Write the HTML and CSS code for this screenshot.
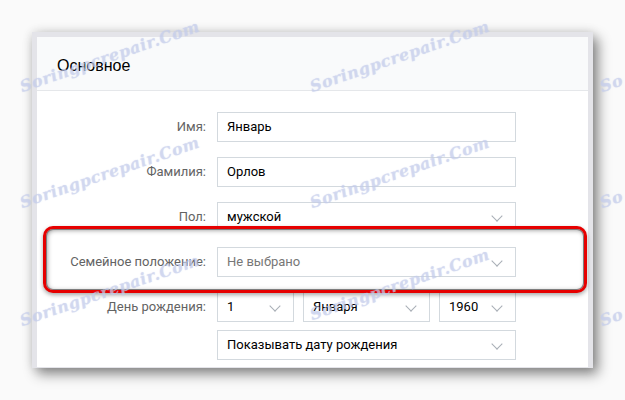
FILE: index.html
```html
<!DOCTYPE html>
<html lang="ru">
<head>
<meta charset="utf-8">
<title>Основное</title>
<link rel="stylesheet" href="styles.css">
</head>
<body>
<div class="frame">
  <div class="card">
    <div class="card-head">Основное</div>
    <div class="card-body">
      <div class="row">
        <div class="label">Имя:</div>
        <div class="field"><div class="input">Январь</div></div>
      </div>
      <div class="row">
        <div class="label">Фамилия:</div>
        <div class="field"><div class="input">Орлов</div></div>
      </div>
      <div class="row">
        <div class="label">Пол:</div>
        <div class="field"><div class="input select">мужской<span class="chev"></span></div></div>
      </div>
      <div class="row row-marked">
        <div class="label">Семейное положение:</div>
        <div class="field"><div class="input select placeholder">Не выбрано<span class="chev"></span></div></div>
      </div>
      <div class="row">
        <div class="label">День рождения:</div>
        <div class="field date">
          <div class="input select">1<span class="chev"></span></div>
          <div class="input select">Января<span class="chev"></span></div>
          <div class="input select">1960<span class="chev"></span></div>
        </div>
      </div>
      <div class="row row-tight">
        <div class="label"></div>
        <div class="field"><div class="input select">Показывать дату рождения<span class="chev"></span></div></div>
      </div>
    </div>
  </div>
</div>
<div class="watermarks" aria-hidden="true">
  <span class="wm wm1">Soringpcrepair.Com</span>
  <span class="wm wm2">Soringpcrepair.Com</span>
  <span class="wm wm3">So</span>
  <span class="wm wm4">Soringpcrepair.Com</span>
  <span class="wm wm5">Soringpcrepair.Com</span>
  <span class="wm wm6">So</span>
  <span class="wm wm7">Soringpcrepair.Com</span>
  <span class="wm wm8">Soringpcrepair.Com</span>
  <span class="wm wm9">So</span>
</div>
</body>
</html>
```
FILE: styles.css
```css
* { box-sizing: border-box; }
html, body { margin: 0; padding: 0; }
body {
  width: 625px;
  height: 400px;
  overflow: hidden;
  background: #fafafa;
  font-family: Roboto, "Liberation Sans", sans-serif;
  font-size: 13px;
  position: relative;
  padding: 32px 0 0 32px;
}
.frame {
  width: 561px;
  border: 5px solid #e4e4e9;
  border-bottom-width: 1px;
  background: #fff;
  box-shadow: 5px 6px 12px rgba(0,0,0,0.45), 0 0 10px rgba(0,0,0,0.12);
}
.card-head {
  height: 54px;
  background: #f9fafb;
  border-bottom: 1px solid #e5e7ea;
  padding: 20px 0 0 20px;
  font-family: "Liberation Sans", Arial, sans-serif;
  font-size: 16px;
  color: #000;
  line-height: 18px;
}
.card-body {
  padding: 21px 0 7px 0;
  display: flex;
  flex-direction: column;
  gap: 15px;
}
.row {
  display: grid;
  grid-template-columns: 169px 299px;
  column-gap: 11px;
  align-items: center;
}
.row-tight { margin-top: -7px; }
.label {
  text-align: right;
  color: #636363;
  line-height: 16px;
}
.field.date {
  display: grid;
  grid-template-columns: 77px 127px 77px;
  column-gap: 9px;
}
.input {
  position: relative;
  height: 30px;
  border: 1px solid #d3d9de;
  background: #fff;
  padding: 0 9px;
  line-height: 28px;
  color: #000;
  white-space: nowrap;
}
.input.placeholder { color: #777; }
.chev {
  position: absolute;
  right: 14px;
  top: 9px;
  width: 8px;
  height: 8px;
  border-right: 1.3px solid #a8aeb6;
  border-bottom: 1.3px solid #a8aeb6;
  transform: rotate(45deg);
}
.row-marked {
  position: relative;
  z-index: 1;
}
.row-marked::before {
  content: "";
  position: absolute;
  z-index: -1;
  left: 6px;
  right: 1px;
  top: -21px;
  bottom: -16px;
  background: #fff;
  border: 3px solid #e60000;
  border-radius: 10px;
  box-shadow: inset 0 0 0 1px #7e7e7e, inset 1px 1px 5px rgba(0,0,0,0.45), 0 2px 4px rgba(0,0,0,0.35);
}
.watermarks {
  position: absolute;
  inset: 0;
  pointer-events: none;
  z-index: 5;
}
.wm {
  position: absolute;
  font-family: "DejaVu Serif", serif;
  font-style: italic;
  font-weight: bold;
  font-size: 16px;
  line-height: 20px;
  letter-spacing: 0.5px;
  color: rgba(206, 213, 240, 0.6);
  text-shadow: 0 0 1px rgba(150, 165, 215, 0.4);
  transform-origin: 0 100%;
  transform: rotate(-19deg);
  white-space: nowrap;
}
.wm1 { left: 24px; top: 77px; }
.wm2 { left: 314px; top: 77px; }
.wm3 { left: 604px; top: 77px; }
.wm4 { left: 24px; top: 193px; }
.wm5 { left: 314px; top: 193px; }
.wm6 { left: 604px; top: 193px; }
.wm7 { left: 24px; top: 311px; }
.wm8 { left: 314px; top: 305px; }
.wm9 { left: 604px; top: 311px; }
```
